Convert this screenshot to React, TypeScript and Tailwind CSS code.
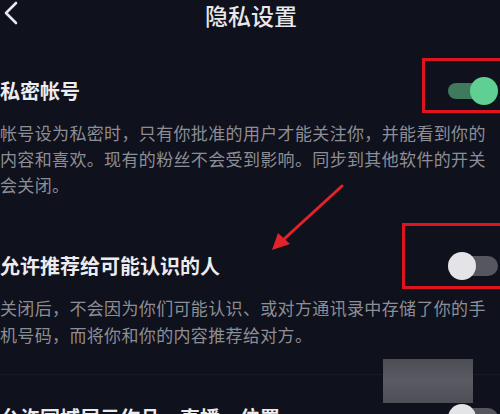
import React from "react";

function Toggle({ on }: { on: boolean }) {
  return (
    <div className="relative w-[50px] h-[28px] shrink-0">
      <div
        className={
          on
            ? "absolute left-0 right-[4px] top-[6px] h-[16px] rounded-full bg-[#3f7a5c]"
            : "absolute left-[4px] right-0 top-[4px] h-[20px] rounded-full bg-[#55565e]"
        }
      />
      <div
        className={
          on
            ? "absolute right-0 top-0 w-[28px] h-[28px] rounded-full bg-[#5fd092]"
            : "absolute left-0 top-0 w-[28px] h-[28px] rounded-full bg-[#e4e4e8]"
        }
      />
    </div>
  );
}

export default function App() {
  return (
    <div
      className="relative w-[500px] h-[414px] overflow-hidden bg-[#0f111c]"
      style={{ fontFamily: '"Noto Sans CJK SC", "Noto Sans", sans-serif' }}
    >
      {/* header */}
      <div className="relative h-[30px] flex items-center justify-center">
        <svg
          className="absolute left-[3px] top-[1px]"
          width="15"
          height="24"
          viewBox="0 0 15 24"
          fill="none"
        >
          <path d="M13 2 L3 12 L13 22" stroke="#e8e8ea" strokeWidth="2.6" strokeLinecap="round" strokeLinejoin="round" />
        </svg>
        <div className="text-[23px] leading-[28px] font-medium text-[#e8e8ea] pl-[2px]">隐私设置</div>
      </div>

      {/* section 1 */}
      <div className="relative mt-[47px] flex items-center justify-between pr-[2px]">
        <div className="text-[20px] leading-[28px] font-bold text-[#ececee]">私密帐号</div>
        <Toggle on />
        <div className="absolute left-[422px] top-[-19px] w-[90px] h-[55px] border-[3px] border-[#e0141e]" />
      </div>
      <div className="mt-[15px] text-[17px] leading-[26px] tracking-[0.35px] text-[#8d8e95] whitespace-nowrap">
        <div>帐号设为私密时，只有你批准的用户才能关注你，并能看到你的</div>
        <div>内容和喜欢。现有的粉丝不会受到影响。同步到其他软件的开关</div>
        <div>会关闭。</div>
      </div>

      {/* section 2 */}
      <div className="relative mt-[54px] flex items-center justify-between pr-[2px]">
        <div className="text-[20px] leading-[28px] font-bold text-[#ececee]">允许推荐给可能认识的人</div>
        <Toggle on={false} />
        <div className="absolute left-[402px] top-[-29px] w-[110px] h-[66px] border-[3px] border-[#e0141e]" />
      </div>
      <div className="mt-[14px] text-[17px] leading-[27px] tracking-[0.35px] text-[#8d8e95] whitespace-nowrap">
        <div>关闭后，不会因为你们可能认识、或对方通讯录中存储了你的手</div>
        <div>机号码，而将你和你的内容推荐给对方。</div>
      </div>

      <div className="mt-[26px] h-px bg-[#171925]" />

      {/* section 3 */}
      <div className="relative mt-[29px] flex items-center justify-between pr-[2px]">
        <div className="text-[20px] leading-[28px] font-bold text-[#ececee]">允许同城展示作品、直播、位置</div>
        <Toggle on={false} />
      </div>

      {/* red arrow annotation */}
      <svg className="absolute left-0 top-0 pointer-events-none" width="500" height="414">
        <line x1="342" y1="186" x2="283" y2="240" stroke="#e3222b" strokeWidth="3" strokeLinecap="round" />
        <polygon points="272,250 278,233 290,244" fill="#e3222b" />
      </svg>

      {/* watermark blur */}
      <div className="absolute left-[383px] top-[359px] w-[90px] h-[44px] bg-gradient-to-b from-[#4c4d55] via-[#5a5b62] to-[#4e4f56]" />
    </div>
  );
}
